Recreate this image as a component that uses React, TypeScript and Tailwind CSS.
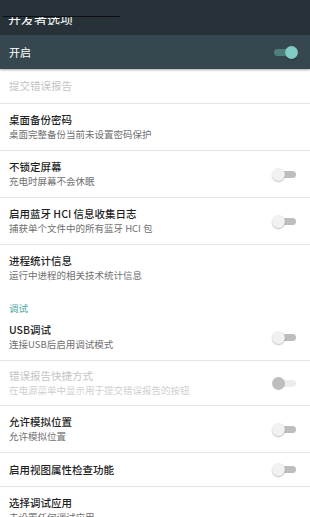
import React from 'react';

type SwitchKind = 'on' | 'off' | 'disabled';

function Toggle({ kind }: { kind: SwitchKind }) {
  if (kind === 'on') {
    return (
      <div className="relative w-[25px] h-[13px] shrink-0">
        <div className="absolute left-[1px] right-[4px] top-[3px] h-[7px] rounded-full bg-[#4e7f7c]" />
        <div className="absolute right-0 top-0 w-[13px] h-[13px] rounded-full bg-[#80cbc4] shadow-[0_1px_1px_rgba(0,0,0,0.3)]" />
      </div>
    );
  }
  const disabled = kind === 'disabled';
  return (
    <div className="relative w-[25px] h-[13px] shrink-0">
      <div
        className={
          disabled
            ? 'absolute left-[4px] right-[1px] top-[3px] h-[7px] rounded-full bg-[#ececec]'
            : 'absolute left-[4px] right-[1px] top-[3px] h-[7px] rounded-full bg-[#bdbdbd]'
        }
      />
      <div
        className={
          disabled
            ? 'absolute left-0 top-0 w-[13px] h-[13px] rounded-full bg-[#bdbdbd]'
            : 'absolute left-0 top-0 w-[13px] h-[13px] rounded-full bg-[#f1f1f1] shadow-[0_1px_1.5px_rgba(0,0,0,0.25)]'
        }
      />
    </div>
  );
}

function Row({
  title,
  summary,
  toggle,
  disabled,
  h = 'h-[46px]',
}: {
  title: string;
  summary?: string;
  toggle?: SwitchKind;
  disabled?: boolean;
  h?: string;
}) {
  return (
    <div className={`flex items-center pl-[9px] pr-[13px] ${h}`}>
      <div className="flex-1 flex flex-col">
        <div
          className={
            disabled
              ? 'text-[10.5px] leading-[14px] text-[#c4c4c4]'
              : 'text-[10.5px] leading-[14px] font-medium text-[#1f1f1f]'
          }
        >
          {title}
        </div>
        {summary && (
          <div
            className={
              disabled
                ? 'text-[9.5px] leading-[13px] mt-[1px] text-[#cfcfcf]'
                : 'text-[9.5px] leading-[13px] mt-[1px] text-[#6f6f6f]'
            }
          >
            {summary}
          </div>
        )}
      </div>
      {toggle && <Toggle kind={toggle} />}
    </div>
  );
}

const Divider = () => <div className="h-px bg-[#e4e4e4]" />;

export default function App() {
  return (
    <div
      className="w-[310px] h-[517px] overflow-hidden bg-white"
      style={{ fontFamily: '"Noto Sans CJK SC", "Noto Sans", sans-serif' }}
    >
      <div className="bg-[#263238] h-[35px] pt-[16px]">
        <div className="ml-[3px] w-[117px] h-px bg-[#0b0f12]" />
        <div className="h-[8px] overflow-hidden flex items-end pl-[8px]">
          <span className="text-[13px] leading-[13px] text-white">开发者选项</span>
        </div>
      </div>
      <div className="bg-[#37474f] h-[34px] flex items-center pl-[9px] pr-[12px] shadow-[0_1px_2px_rgba(0,0,0,0.35)] relative">
        <div className="flex-1 text-[11px] text-white">开启</div>
        <Toggle kind="on" />
      </div>
      <Row title="提交错误报告" disabled h="h-[34px]" />
      <Divider />
      <Row title="桌面备份密码" summary="桌面完整备份当前未设置密码保护" />
      <Divider />
      <Row title="不锁定屏幕" summary="充电时屏幕不会休眠" toggle="off" />
      <Divider />
      <Row title="启用蓝牙 HCI 信息收集日志" summary="捕获单个文件中的所有蓝牙 HCI 包" toggle="off" />
      <Divider />
      <Row title="进程统计信息" summary="运行中进程的相关技术统计信息" />
      <div className="h-[23px] pt-[11px] pl-[9px] text-[9.5px] leading-[12px] text-[#4aa89d]">调试</div>
      <Row title="USB调试" summary="连接USB后启用调试模式" toggle="off" />
      <Divider />
      <Row title="错误报告快捷方式" summary="在电源菜单中显示用于提交错误报告的按钮" toggle="disabled" disabled h="h-[44px]" />
      <Divider />
      <Row title="允许模拟位置" summary="允许模拟位置" toggle="off" />
      <Divider />
      <Row title="启用视图属性检查功能" toggle="off" h="h-[33px]" />
      <Divider />
      <Row title="选择调试应用" summary="未设置任何调试应用" />
    </div>
  );
}
